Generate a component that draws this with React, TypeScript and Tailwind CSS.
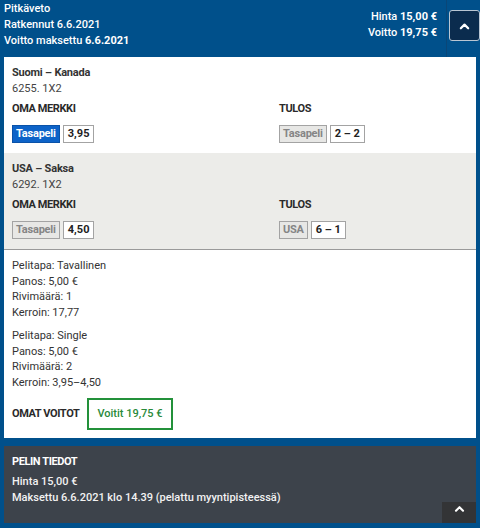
import React from "react";

const Chevron = ({ className }: { className?: string }) => (
  <svg viewBox="0 0 12 8" className={className} fill="none" stroke="currentColor" strokeWidth="2.4" strokeLinecap="round" strokeLinejoin="round">
    <polyline points="2 6.5 6 2.5 10 6.5" />
  </svg>
);

type Match = {
  name: string;
  code: string;
  pick: string;
  odds: string;
  result: string;
  score: string;
  won: boolean;
  shaded: boolean;
};

const matches: Match[] = [
  { name: "Suomi – Kanada", code: "6255. 1X2", pick: "Tasapeli", odds: "3,95", result: "Tasapeli", score: "2 – 2", won: true, shaded: false },
  { name: "USA – Saksa", code: "6292. 1X2", pick: "Tasapeli", odds: "4,50", result: "USA", score: "6 – 1", won: false, shaded: true },
];

function MatchRow({ m }: { m: Match }) {
  return (
    <div className={`pl-2 pt-2 pb-[10px] ${m.shaded ? "bg-[#ecece9] border-b border-[#9a9a9a]" : "bg-white"}`}>
      <div className="font-bold text-[#333] tracking-[-0.2px]">{m.name}</div>
      <div className="text-[#444]">{m.code}</div>
      <div className="flex mt-1">
        <div className="w-[267px]">
          <div className="font-bold text-[#2a2a2a] tracking-[-0.4px]">OMA MERKKI</div>
          <div className="flex gap-[3px] mt-2">
            {m.won ? (
              <span className="h-[18px] inline-flex items-center px-[3px] border border-[#0a52a8] bg-[#0d63c8] text-white font-bold tracking-[-0.2px]">{m.pick}</span>
            ) : (
              <span className="h-[18px] inline-flex items-center px-[3px] border border-[#a3a3a3] bg-[#e7e7e5] text-[#858585] font-bold tracking-[-0.2px]">{m.pick}</span>
            )}
            <span className="h-[18px] inline-flex items-center px-[4px] border border-[#a3a3a3] bg-white text-[#222] font-bold">{m.odds}</span>
          </div>
        </div>
        <div>
          <div className="font-bold text-[#2a2a2a] tracking-[-0.4px]">TULOS</div>
          <div className="flex gap-[3px] mt-2">
            <span className="h-[18px] inline-flex items-center px-[3px] border border-[#a3a3a3] bg-[#e7e7e5] text-[#858585] font-bold tracking-[-0.2px]">{m.result}</span>
            <span className="h-[18px] inline-flex items-center px-[4px] border border-[#a3a3a3] bg-white text-[#222] font-bold">{m.score}</span>
          </div>
        </div>
      </div>
    </div>
  );
}

export default function App() {
  return (
    <div className="w-[480px] h-[528px] bg-[#00508b] font-['Roboto',sans-serif] text-[11px] leading-[16px] overflow-hidden">
      {/* Header */}
      <div className="flex h-[57px] text-white">
        <div className="flex-1 pl-1 pt-[1px] font-medium">
          <div>Pitkäveto</div>
          <div>Ratkennut 6.6.2021</div>
          <div>
            Voitto maksettu <span className="font-bold">6.6.2021</span>
          </div>
        </div>
        <div className="pt-[9px] pr-[9px] text-right font-medium">
          <div>
            Hinta <span className="font-bold">15,00 €</span>
          </div>
          <div>
            Voitto <span className="font-bold">19,75 €</span>
          </div>
        </div>
        <div className="w-px bg-[#0a4677]" />
        <div className="pl-[2px] pt-[10px]">
          <button className="w-[31px] h-[31px] rounded-[3px] border border-[#b9c6d3] bg-[#0b2c4e] flex items-center justify-center text-white">
            <Chevron className="w-[11px] h-[8px]" />
          </button>
        </div>
      </div>

      {/* Bet panel */}
      <div className="mx-1 bg-white">
        {matches.map((m) => (
          <MatchRow key={m.name} m={m} />
        ))}
        <div className="pl-2 pt-2 pb-2 text-[#333] leading-[15.5px]">
          <div>
            <div>Pelitapa: Tavallinen</div>
            <div>Panos: 5,00 €</div>
            <div>Rivimäärä: 1</div>
            <div>Kerroin: 17,77</div>
          </div>
          <div className="mt-2">
            <div>Pelitapa: Single</div>
            <div>Panos: 5,00 €</div>
            <div>Rivimäärä: 2</div>
            <div>Kerroin: 3,95–4,50</div>
          </div>
          <div className="flex items-center gap-2 mt-2">
            <span className="font-bold text-[#2a2a2a] tracking-[-0.4px]">OMAT VOITOT</span>
            <span className="h-[32px] inline-flex items-center px-[8px] border-2 border-[#23913a] text-[#2a8a3a] font-medium">Voitit 19,75 €</span>
          </div>
        </div>
      </div>

      {/* Game info */}
      <div className="relative mx-1 mt-2 h-[77px] bg-[#3d434b] pl-2 pt-2 text-[#f2f2f2] font-medium">
        <div className="font-bold text-white tracking-[-0.4px]">PELIN TIEDOT</div>
        <div className="mt-1">Hinta 15,00 €</div>
        <div>Maksettu 6.6.2021 klo 14.39 (pelattu myyntipisteessä)</div>
        <button className="absolute right-0 bottom-0 w-[34px] h-[21px] bg-[#333436] flex justify-center pt-[3px] text-white">
          <Chevron className="w-[11px] h-[7px]" />
        </button>
      </div>
    </div>
  );
}
